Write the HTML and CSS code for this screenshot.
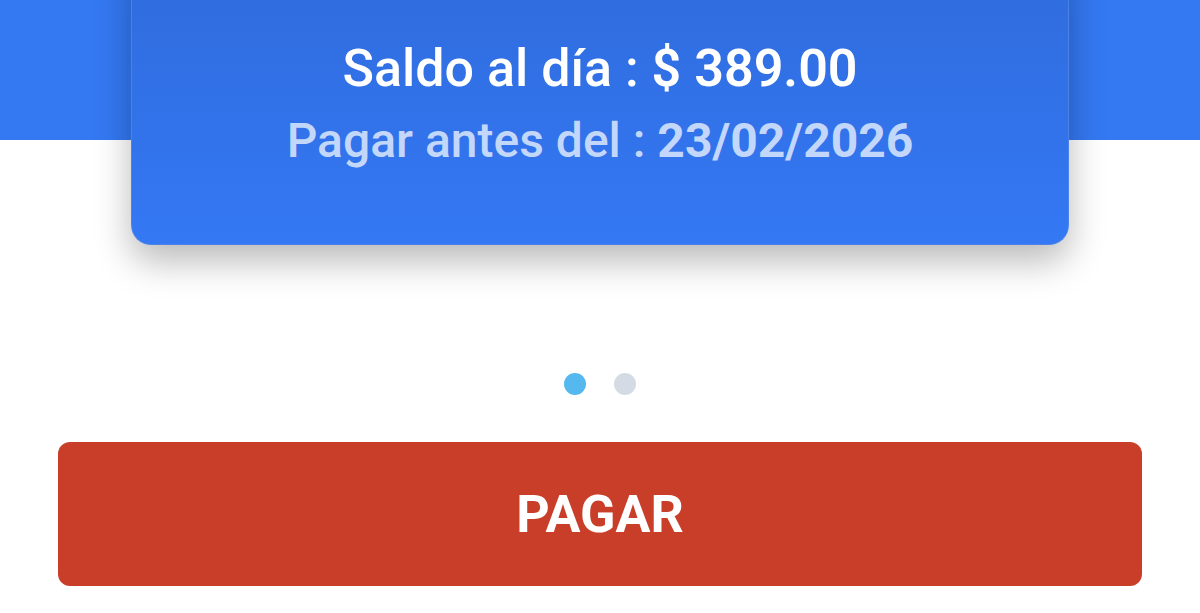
FILE: index.html
```html
<!DOCTYPE html>
<html lang="es">
<head>
  <meta charset="UTF-8" />
  <meta name="viewport" content="width=device-width, initial-scale=1.0" />
  <title>Saldo</title>
  <link rel="stylesheet" href="styles.css">
</head>
<body>
  <div class="top">
    <div class="card">
      <div class="balance">Saldo al día : <b>$ 389.00</b></div>
      <div class="due">Pagar antes del : <b>23/02/2026</b></div>
    </div>
  </div>

  <div class="dots">
    <span class="dot active"></span>
    <span class="dot"></span>
  </div>

  <div class="actions">
    <button class="pay">PAGAR</button>
  </div>
</body>
</html>
```

FILE: styles.css
```css
body {
  font-family: Roboto, "Liberation Sans", sans-serif;
  background: #ffffff;
  margin: 0;
  overflow: hidden;
}

.top {
  display: flow-root;
  background: linear-gradient(#3478f2 0, #3478f2 140px, #ffffff 140px);
  padding: 0 131px;
}
.card {
  margin-top: -40px;
  padding: 79px 0 75px;
  background: linear-gradient(#2f6bdc, #3478f4);
  border: 1px solid #4a82e6;
  border-top: none;
  border-radius: 0 0 20px 20px;
  box-shadow: 0 16px 36px rgba(0, 0, 0, 0.28);
  display: flex;
  flex-direction: column;
  align-items: center;
  gap: 14px;
}
.balance {
  color: #ffffff;
  font-size: 52px;
  line-height: 60px;
  font-weight: 500;
}
.balance b {
  font-weight: 600;
}
.due {
  color: #c3d7fa;
  font-size: 48px;
  line-height: 56px;
  font-weight: 500;
}
.due b {
  font-weight: 700;
}

.dots {
  display: flex;
  justify-content: center;
  gap: 28px;
  margin-top: 128px;
}
.dot {
  width: 22px;
  height: 22px;
  border-radius: 50%;
  background: #d5dbe5;
}
.dot.active {
  background: #55b8ef;
}

.actions {
  padding: 47px 58px 0;
}
.pay {
  display: block;
  width: 100%;
  height: 144px;
  border: none;
  border-radius: 12px;
  background: #c93e29;
  color: #ffffff;
  font-family: Roboto, "Liberation Sans", sans-serif;
  font-size: 52px;
  font-weight: 700;
  cursor: pointer;
}
```
